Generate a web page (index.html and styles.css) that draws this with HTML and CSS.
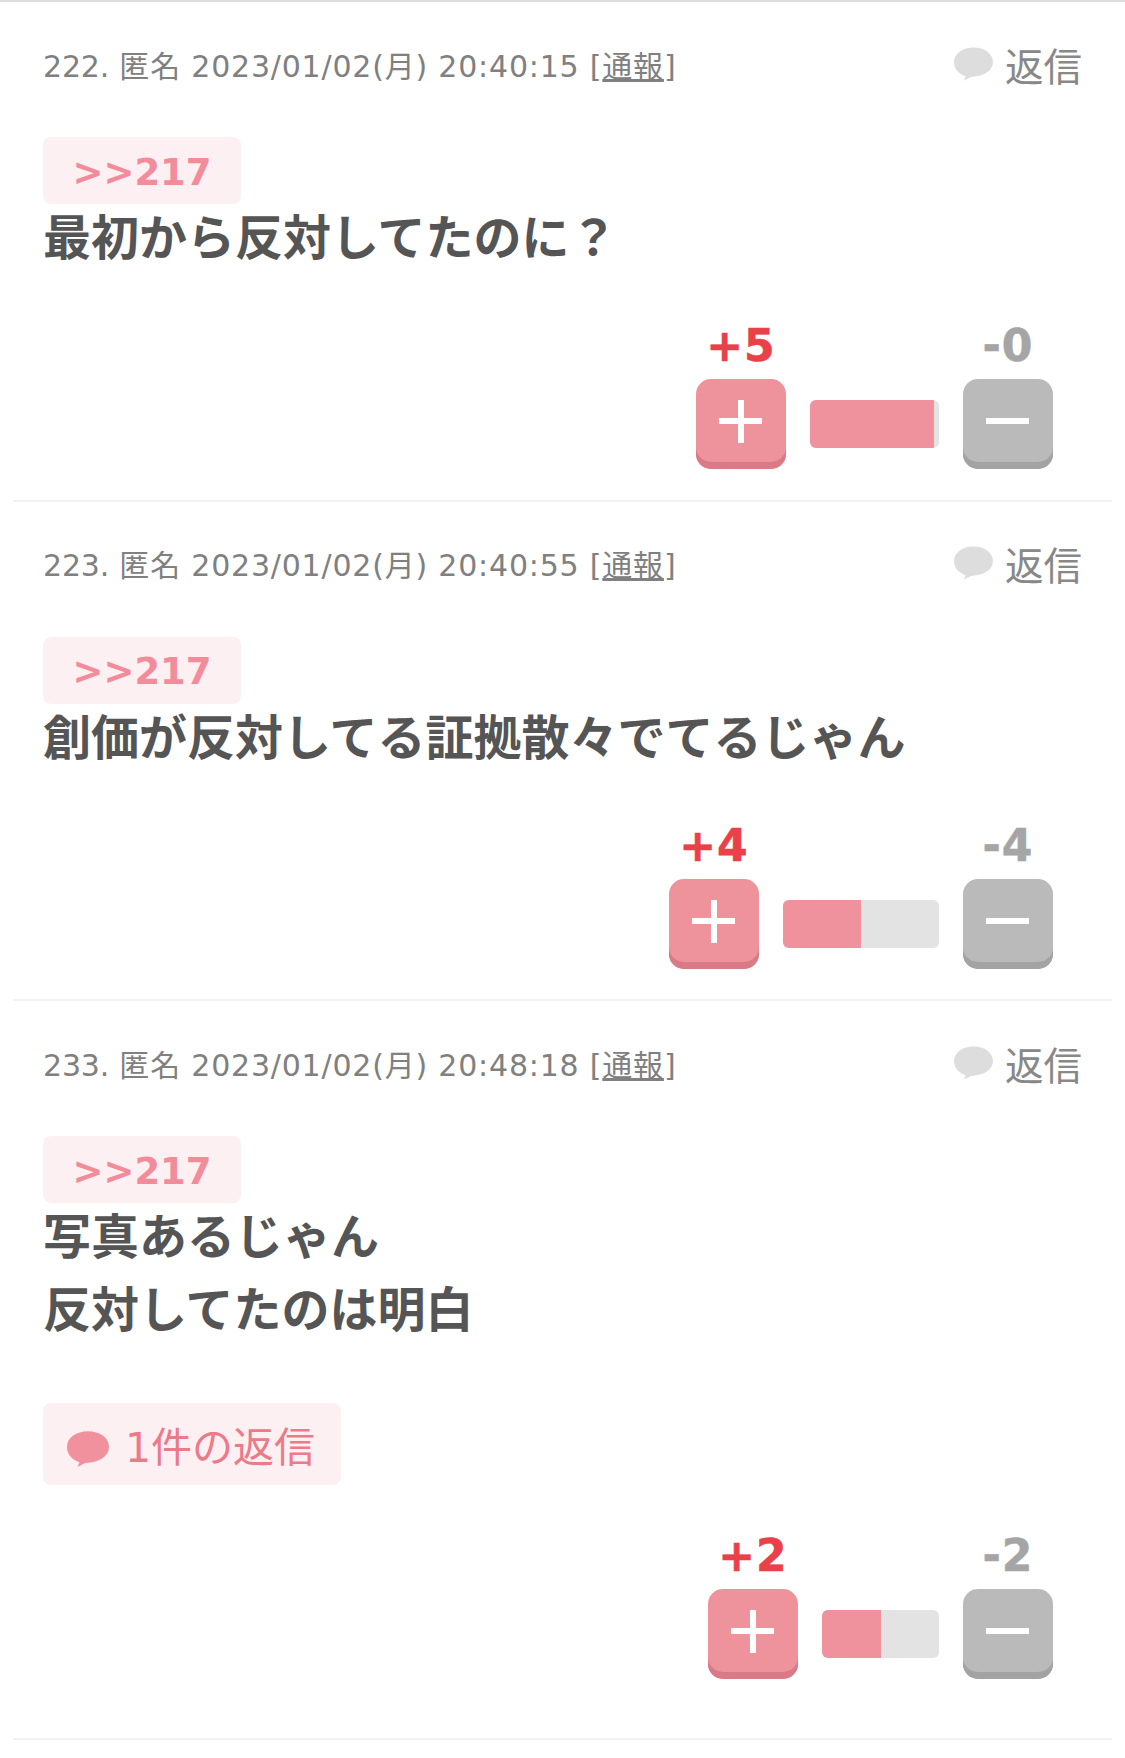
FILE: index.html
```html
<!DOCTYPE html>
<html lang="ja">
<head>
<meta charset="utf-8">
<title>コメント</title>
<link rel="stylesheet" href="styles.css">
</head>
<body>
<svg class="defs" width="0" height="0" aria-hidden="true"><symbol id="bubble" viewBox="0 0 40 34"><path d="M20 0C31 0 40 6 40 15C40 24 31 29 20 30C17 30 14 32 10 34L12 29.500C5 27.500 0 22 0 15C0 6 9 0 20 0Z"/></symbol></svg>
<main class="list">
  <article class="comment">
    <header class="meta">
      <p class="info"><span class="num">222.</span> 匿名 2023/01/02(月) 20:40:15 [<a class="report">通報</a>]</p>
      <div class="reply"><svg class="bubble"><use href="#bubble"/></svg><span>返信</span></div>
    </header>
    <div class="anchor">&gt;&gt;217</div>
    <p class="body">最初から反対してたのに？</p>
    <div class="votes">
      <div class="vote">
        <span class="count plus-count">+5</span>
        <button class="btn plus"><i class="h"></i><i class="v"></i></button>
      </div>
      <div class="bar" style="width:129px"><div class="fill" style="width:96%"></div></div>
      <div class="vote">
        <span class="count minus-count">-0</span>
        <button class="btn minus"><i class="h"></i></button>
      </div>
    </div>
  </article>
  <article class="comment">
    <header class="meta">
      <p class="info"><span class="num">223.</span> 匿名 2023/01/02(月) 20:40:55 [<a class="report">通報</a>]</p>
      <div class="reply"><svg class="bubble"><use href="#bubble"/></svg><span>返信</span></div>
    </header>
    <div class="anchor">&gt;&gt;217</div>
    <p class="body">創価が反対してる証拠散々でてるじゃん</p>
    <div class="votes">
      <div class="vote">
        <span class="count plus-count">+4</span>
        <button class="btn plus"><i class="h"></i><i class="v"></i></button>
      </div>
      <div class="bar" style="width:156px"><div class="fill" style="width:50%"></div></div>
      <div class="vote">
        <span class="count minus-count">-4</span>
        <button class="btn minus"><i class="h"></i></button>
      </div>
    </div>
  </article>
  <article class="comment last">
    <header class="meta">
      <p class="info"><span class="num">233.</span> 匿名 2023/01/02(月) 20:48:18 [<a class="report">通報</a>]</p>
      <div class="reply"><svg class="bubble"><use href="#bubble"/></svg><span>返信</span></div>
    </header>
    <div class="anchor">&gt;&gt;217</div>
    <p class="body">写真あるじゃん<br>反対してたのは明白</p>
    <div class="replies"><svg class="bubble pink"><use href="#bubble"/></svg><span>1件の返信</span></div>
    <div class="votes">
      <div class="vote">
        <span class="count plus-count">+2</span>
        <button class="btn plus"><i class="h"></i><i class="v"></i></button>
      </div>
      <div class="bar" style="width:117px"><div class="fill" style="width:50%"></div></div>
      <div class="vote">
        <span class="count minus-count">-2</span>
        <button class="btn minus"><i class="h"></i></button>
      </div>
    </div>
  </article>
</main>
</body>
</html>
```

FILE: styles.css
```css
* { box-sizing: border-box; }
html, body { margin: 0; padding: 0; background: #fff; }
body {
  font-family: "DejaVu Sans", "Noto Sans CJK JP", sans-serif;
  color: #555;
  height: 1758px;
  overflow: hidden;
}
.defs { position: absolute; }
.list {
  border-top: 2px solid #ddd;
}
.comment {
  margin: 0 13px;
  padding: 0 30px 30.500px;
  border-bottom: 2px solid #f2f2f2;
}
.comment.last {
  padding-bottom: 59px;
}
.meta {
  display: flex;
  justify-content: space-between;
  align-items: center;
  height: 135px;
  padding-bottom: 12px;
}
.info {
  margin: 0;
  font-size: 30px;
  letter-spacing: 0.8px;
  color: #808080;
  white-space: nowrap;
}
.num { letter-spacing: -0.2px; }
.report { text-decoration: underline; }
.reply {
  display: flex;
  align-items: center;
  gap: 12px;
  font-size: 38.500px;
  color: #888;
}
.bubble {
  width: 39px;
  height: 34px;
  fill: #ddd;
}
.anchor {
  width: 198px;
  height: 67px;
  padding-top: 3px;
  display: flex;
  align-items: center;
  justify-content: center;
  font-size: 37px;
  font-weight: bold;
  color: #f38c9a;
  background: #fdf0f2;
  border-radius: 8px;
}
.body {
  margin: -2px 0 0;
  font-size: 48px;
  line-height: 73px;
  font-weight: bold;
  color: #555;
}
.replies {
  display: flex;
  align-items: center;
  gap: 16px;
  width: 298px;
  height: 82px;
  margin-top: 56px;
  padding-left: 24px;
  font-size: 41px;
  color: #ec7a89;
  background: #fdf0f2;
  border-radius: 8px;
}
.bubble.pink { width: 42px; height: 36px; margin-top: 9px; fill: #f0919d; }
.votes {
  display: flex;
  justify-content: flex-end;
  align-items: flex-end;
  margin-top: 45px;
  padding-right: 29px;
}
.vote {
  display: flex;
  flex-direction: column;
  align-items: center;
  width: 90px;
}
.count {
  font-size: 44px;
  line-height: 52px;
  margin-bottom: 7px;
  font-weight: bold;
  letter-spacing: 1px;
  -webkit-text-stroke: 0.6px currentColor;
}
.plus-count { color: #e9404a; }
.minus-count { color: #a5a5a5; }
.btn {
  position: relative;
  display: block;
  width: 90px;
  height: 90px;
  padding: 0;
  border: 0;
  border-radius: 15px;
}
.plus { background: #ee929c; box-shadow: inset 0 -7px 0 #d97a86; }
.minus { background: #bababa; box-shadow: inset 0 -7px 0 #a3a3a3; }
.btn i {
  position: absolute;
  background: #fff;
}
.btn .h { left: 23px; top: 39px; width: 43px; height: 6px; }
.btn .v { left: 42px; top: 21px; width: 6px; height: 43px; }
.bar {
  height: 48px;
  margin: 0 24px 21px;
  background: #e3e3e3;
  border-radius: 6px;
  overflow: hidden;
}
.fill {
  height: 100%;
  background: #ef929d;
}
```
